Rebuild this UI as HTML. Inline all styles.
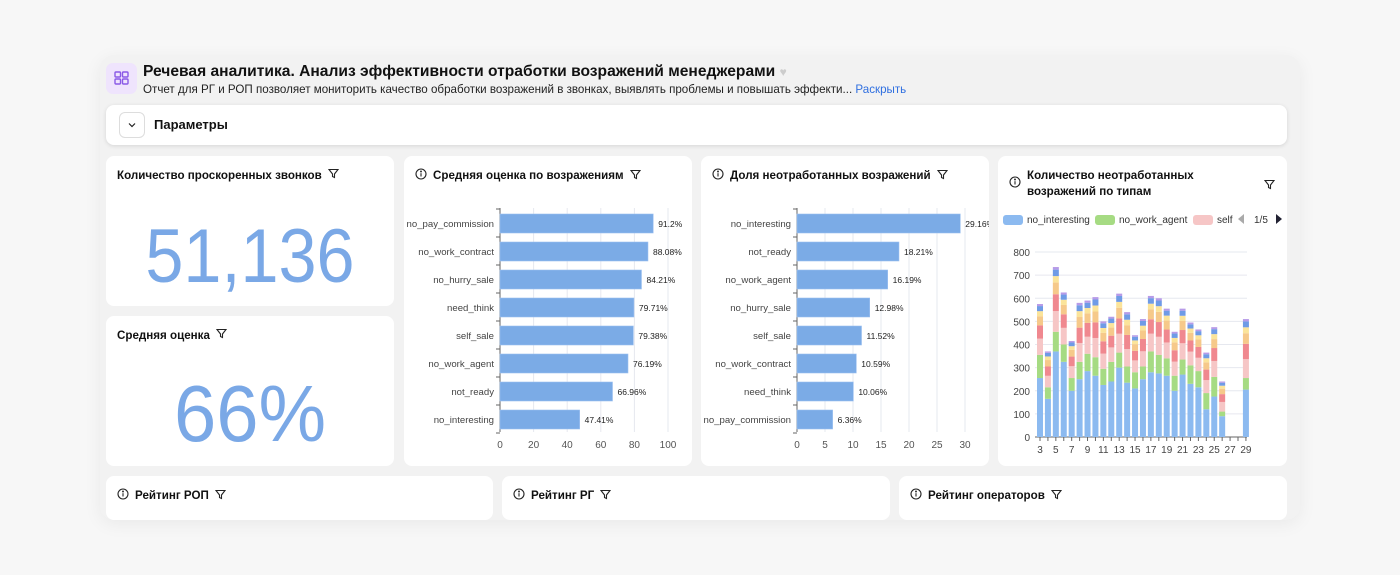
<!DOCTYPE html>
<html><head><meta charset="utf-8"><style>
*{box-sizing:border-box;margin:0;padding:0}
body{width:1400px;height:575px;background:#f7f7f7;font-family:"Liberation Sans",sans-serif;position:relative;overflow:hidden;color:#111}
.wrap{position:absolute;left:100px;top:55px;width:1200px;height:465px;background:#f2f2f2;border-radius:14px;box-shadow:0 4px 18px rgba(0,0,0,.06)}
.card{position:absolute;background:#fff;border-radius:8px}
.t{position:absolute;font-size:11.6px;font-weight:bold;color:#111;display:flex;align-items:center;gap:6px}
svg text{font-family:"Liberation Sans",sans-serif}
.big{position:absolute;left:0;width:288px;text-align:center;color:#7aa8e6;font-weight:300}
</style></head><body>
<div class="wrap"></div>
<div style="position:absolute;left:106px;top:63px;width:31px;height:31px;border-radius:7px;background:#efe4fd">
<svg width="31" height="31" viewBox="0 0 31 31" fill="none" stroke="#8a5ae6" stroke-width="1.4"><rect x="9" y="9" width="5.5" height="5" rx="1"/><rect x="16.5" y="9" width="5.5" height="5" rx="1"/><rect x="9" y="16" width="5.5" height="5" rx="1"/><rect x="16.5" y="16" width="5.5" height="5" rx="1"/></svg></div>
<div style="position:absolute;left:143px;top:63px;font-size:15.6px;font-weight:bold">Речевая аналитика. Анализ эффективности отработки возражений менеджерами <span style="color:#ccc;font-size:12px">♥</span></div>
<div style="position:absolute;left:143px;top:83px;font-size:11.6px;color:#222">Отчет для РГ и РОП позволяет мониторить качество обработки возражений в звонках, выявлять проблемы и повышать эффекти... <span style="color:#2f6fe0">Раскрыть</span></div>
<div class="card" style="left:106px;top:105px;width:1181px;height:40px;box-shadow:0 1px 4px rgba(0,0,0,.12)">
<div style="position:absolute;left:13px;top:7px;width:26px;height:26px;border:1px solid #ddd;border-radius:6px"><svg width="24" height="24" viewBox="0 0 24 24" fill="none" stroke="#222" stroke-width="1.2"><path d="M9 10.5l3 3 3-3"/></svg></div>
<div style="position:absolute;left:48px;top:12px;font-size:13px;font-weight:bold">Параметры</div></div>

<div class="card" style="left:106px;top:156px;width:288px;height:150px">
<div class="t" style="left:11px;top:12px">Количество проскоренных звонков <span class="f"></span></div>
<div class="big" style="top:57px;font-size:76px;transform:scaleX(.9)">51,136</div></div>
<div class="card" style="left:106px;top:316px;width:288px;height:150px">
<div class="t" style="left:11px;top:12px">Средняя оценка <span class="f"></span></div>
<div class="big" style="top:52px;font-size:80px;transform:scaleX(.95)">66%</div></div>

<div class="card" style="left:404px;top:156px;width:288px;height:310px"><div class="t" style="left:11px;top:12px"><span class="i"></span>Средняя оценка по возражениям <span class="f"></span></div><svg id="c1" width="288" height="310" style="position:absolute;left:0;top:0"></svg></div>
<div class="card" style="left:701px;top:156px;width:288px;height:310px"><div class="t" style="left:11px;top:12px"><span class="i"></span>Доля неотработанных возражений <span class="f"></span></div><svg id="c2" width="288" height="310" style="position:absolute;left:0;top:0"></svg></div>
<div class="card" style="left:998px;top:156px;width:289px;height:310px"><div class="t" style="left:11px;top:12px;line-height:16px"><span class="i"></span>Количество неотработанных<br>возражений по типам</div><span class="f" style="position:absolute;left:266px;top:21px"></span>
<svg id="c3" width="289" height="310" style="position:absolute;left:0;top:0"></svg></div>

<div class="card" style="left:106px;top:476px;width:387px;height:44px"><div class="t" style="left:11px;top:12px"><span class="i"></span>Рейтинг РОП <span class="f"></span></div></div>
<div class="card" style="left:502px;top:476px;width:388px;height:44px"><div class="t" style="left:11px;top:12px"><span class="i"></span>Рейтинг РГ <span class="f"></span></div></div>
<div class="card" style="left:899px;top:476px;width:388px;height:44px"><div class="t" style="left:11px;top:12px"><span class="i"></span>Рейтинг операторов <span class="f"></span></div></div>

<script>
const F='<svg width="11" height="11" viewBox="0 0 11 11" fill="none" stroke="#222" stroke-width="1.1"><path d="M1 1.5h9L6.5 6v3.5l-2-1V6z"/></svg>';
const I='<svg width="12" height="12" viewBox="0 0 12 12" fill="none" stroke="#222" stroke-width="1.1"><circle cx="6" cy="6" r="5"/><path d="M6 5.2v3.3"/><circle cx="6" cy="3.5" r=".4" fill="#222"/></svg>';
document.querySelectorAll('.f').forEach(e=>e.innerHTML=F);
document.querySelectorAll('.i').forEach(e=>e.innerHTML=I);
function hbar(id,ax,w,max,step,labels,vals){
 let s='',ox=ax-(id=='c1'?404:701);
 for(let k=0;k<=max;k+=step){let x=ox+k/max*w;s+=`<line x1="${x}" y1="52" x2="${x}" y2="276" stroke="#e6e8ef"/><text x="${x}" y="292" font-size="10" fill="#555" text-anchor="middle">${k}</text>`}
 s+=`<line x1="${ox}" y1="52" x2="${ox}" y2="276" stroke="#666"/>`;
 for(let i=0;i<=8;i++)s+=`<line x1="${ox-4}" y1="${53+i*28}" x2="${ox}" y2="${53+i*28}" stroke="#666"/>`;
 labels.forEach((l,i)=>{let y=58+i*28,bw=vals[i]/max*w;
 s+=`<rect x="${ox}" y="${y}" width="${bw}" height="19" fill="#7babe6" stroke="#9cc0f0" stroke-width=".6"/><text x="${ox-6}" y="${y+13}" font-size="9.6" fill="#444" text-anchor="end">${l}</text><text x="${ox+bw+5}" y="${y+13}" font-size="8.5" fill="#222">${vals[i]}%</text>`});
 document.getElementById(id).innerHTML=s}
hbar('c1',500,168,100,20,['no_pay_commission','no_work_contract','no_hurry_sale','need_think','self_sale','no_work_agent','not_ready','no_interesting'],[91.2,88.08,84.21,79.71,79.38,76.19,66.96,47.41]);
hbar('c2',797,168,30,5,['no_interesting','not_ready','no_work_agent','no_hurry_sale','self_sale','no_work_contract','need_think','no_pay_commission'],[29.16,18.21,16.19,12.98,11.52,10.59,10.06,6.36]);
(function(){
 let s='',y0=281,k=185/800;
 s+=`<rect x="5" y="59" width="20" height="10" rx="3" fill="#8cbaf0"/><text x="29" y="67" font-size="10" fill="#333">no_interesting</text><rect x="97" y="59" width="20" height="10" rx="3" fill="#a6db83"/><text x="121" y="67" font-size="10" fill="#333">no_work_agent</text><rect x="195" y="59" width="20" height="10" rx="3" fill="#f6c6c6"/><text x="219" y="67" font-size="10" fill="#333">self</text><path d="M246 58l-6 5 6 5z" fill="#aaa"/><text x="256" y="67" font-size="10" fill="#333">1/5</text><path d="M278 58l6 5-6 5z" fill="#223"/>`;
 for(let v=0;v<=800;v+=100){let y=y0-v*k;s+=`<line x1="37" y1="${y}" x2="249" y2="${y}" stroke="#e6e8ef"/><text x="32" y="${y+4}" font-size="10" fill="#444" text-anchor="end">${v}</text>`}
 s+=`<line x1="37" y1="${y0}" x2="249" y2="${y0}" stroke="#666"/>`;
 const T=[575,370,735,625,415,580,590,605,500,520,620,540,440,510,610,600,555,455,555,495,465,365,475,240,0,0,510];
 const B=[255,165,370,325,200,250,285,265,225,240,300,235,210,250,280,275,265,200,270,230,215,120,175,90,0,0,205];
 const G=[355,215,455,400,255,325,360,345,295,325,365,305,280,305,370,355,340,265,335,310,285,190,260,110,0,0,255];
 const cols=['#f6c6c6','#f0888f','#f6c98a','#fbe49a','#6f9be6','#b79be8'],fr=[.32,.26,.18,.1,.1,.04];
 for(let i=0;i<27;i++){let x=39+i*7.92,c=x+3;
  s+=`<line x1="${c}" y1="${y0}" x2="${c}" y2="${y0+4}" stroke="#666"/>`;
  if(i%2==0)s+=`<text x="${c}" y="${y0+16}" font-size="10" fill="#444" text-anchor="middle">${i+3}</text>`;
  if(!T[i])continue;
  let segs=[[0,B[i],'#8cbaf0'],[B[i],G[i],'#a6db83']],cur=G[i],r=T[i]-G[i];
  fr.forEach((f,j)=>{segs.push([cur,cur+r*f,cols[j]]);cur+=r*f});
  segs.forEach(([a,b,cl])=>{s+=`<rect x="${x}" y="${y0-b*k}" width="6" height="${(b-a)*k}" fill="${cl}"/>`});
 }
 document.getElementById('c3').innerHTML=s})();
</script>
</body></html>
